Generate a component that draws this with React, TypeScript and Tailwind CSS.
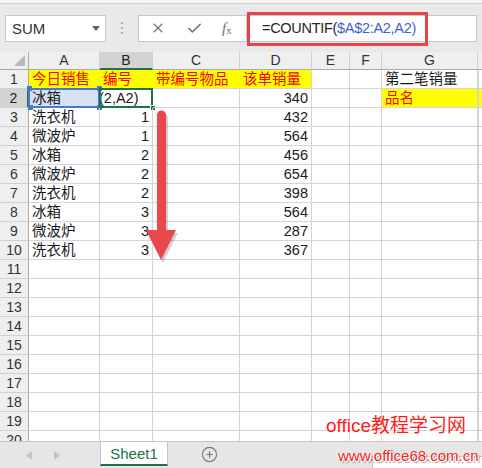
import { X, Check, CirclePlus } from 'lucide-react';

const COLS = [
  { key: 'A', w: 'w-[71px]' },
  { key: 'B', w: 'w-[53px]' },
  { key: 'C', w: 'w-[87px]' },
  { key: 'D', w: 'w-[72px]' },
  { key: 'E', w: 'w-[38px]' },
  { key: 'F', w: 'w-[32px]' },
  { key: 'G', w: 'w-[96px]' },
];

type CellData = { text?: string; red?: boolean; fill?: boolean; right?: boolean };

const NAMES = ['冰箱', '洗衣机', '微波炉', '冰箱', '微波炉', '洗衣机', '冰箱', '微波炉', '洗衣机'];
const NUMS = ['', '1', '1', '2', '2', '2', '3', '3', '3'];
const SALES = ['340', '432', '564', '456', '654', '398', '564', '287', '367'];

function buildRows(): Record<string, CellData>[] {
  const rows: Record<string, CellData>[] = [];
  rows.push({
    A: { text: '今日销售', red: true, fill: true },
    B: { text: '编号', red: true, fill: true },
    C: { text: '带编号物品', red: true, fill: true },
    D: { text: '该单销量', red: true, fill: true },
    G: { text: '第二笔销量' },
  });
  for (let i = 0; i < 9; i++) {
    const r: Record<string, CellData> = {
      A: { text: NAMES[i] },
      B: { text: NUMS[i], right: i > 0 },
      D: { text: SALES[i], right: true },
    };
    if (i === 0) r.G = { text: '品名', red: true, fill: true };
    rows.push(r);
  }
  for (let i = 11; i <= 20; i++) rows.push({});
  return rows;
}

const ROWS = buildRows();

function Handle({ pos, color }: { pos: string; color: string }) {
  return <div className={`absolute w-[5px] h-[5px] ${pos} ${color}`} />;
}

function Cell({ col, row, data }: { col: (typeof COLS)[number]; row: number; data?: CellData }) {
  const fillCls = data?.fill ? 'bg-[#ffff00]' : '';
  const rightBorder = data?.fill && col.key !== 'D' && col.key !== 'G' ? 'border-r-[#ffff00]' : 'border-r-[#d4d4d4]';
  const selectedA = row === 2 && col.key === 'A';
  const editingB = row === 2 && col.key === 'B';
  return (
    <div
      className={`${col.w} shrink-0 h-full relative border-r border-b border-b-[#d4d4d4] ${rightBorder} ${fillCls} ${
        selectedA ? 'bg-[#d6e2f4]' : ''
      } flex items-center ${data?.right ? 'justify-end pr-[3px]' : editingB ? 'pl-0' : 'pl-[3px]'}`}
    >
      {data?.text && (
        <span className={`whitespace-nowrap leading-none ${data.red ? 'text-[#ff0000]' : 'text-[#1a1a1a]'}`}>
          {data.text}
        </span>
      )}
      {editingB && (
        <span className="whitespace-nowrap leading-none text-[#1a1a1a] -ml-[1px]">(2,A2)</span>
      )}
      {selectedA && (
        <>
          <div className="absolute -left-[1px] -top-[1px] -right-[1px] -bottom-[1px] border-2 border-[#4a78d0]" />
          <Handle pos="-left-[2px] -top-[3px]" color="bg-[#4a78d0]" />
          <Handle pos="-right-[3px] -top-[3px]" color="bg-[#4a78d0]" />
          <Handle pos="-left-[1px] -bottom-[3px]" color="bg-[#4a78d0]" />
          <Handle pos="-right-[3px] -bottom-[3px]" color="bg-[#4a78d0]" />
        </>
      )}
      {editingB && (
        <>
          <div className="absolute -left-[1px] -top-[1px] -right-[1px] -bottom-[1px] border-2 border-[#217346]" />
          <div className="absolute -right-[4px] -bottom-[4px] w-[6px] h-[6px] bg-[#217346] border border-white" />
        </>
      )}
    </div>
  );
}

function RowHeader({ n }: { n: number }) {
  const active = n === 2;
  return (
    <div
      className={`w-[29px] shrink-0 h-full flex items-center justify-center text-[14px] border-b border-b-[#d0d0d0] ${
        active ? 'bg-[#d3d3d3] border-r-2 border-r-[#217346] text-[#222]' : 'bg-[#efefef] border-r border-r-[#ababab] text-[#333]'
      }`}
    >
      {n}
    </div>
  );
}

function FormulaBar() {
  return (
    <div className="h-[48px] bg-[#e9e9e9] flex items-center px-[5px]">
      <div className="w-[101px] h-[27px] bg-white border border-[#c6c6c6] flex items-center justify-between pl-[6px] pr-[5px]">
        <span className="text-[15px] text-[#333] leading-none">SUM</span>
        <svg width="8" height="5" viewBox="0 0 8 5">
          <path d="M0 0 L8 0 L4 5 Z" fill="#666" />
        </svg>
      </div>
      <div className="w-[32px] flex flex-col items-center gap-[3px]">
        <div className="w-[2px] h-[2px] bg-[#a9a9a9]" />
        <div className="w-[2px] h-[2px] bg-[#a9a9a9]" />
        <div className="w-[2px] h-[2px] bg-[#a9a9a9]" />
      </div>
      <div className="w-[108px] h-[27px] bg-white border border-[#c6c6c6] border-r-0 flex items-center pl-[11px]">
        <X size={16} strokeWidth={1.7} color="#6f6f6f" />
        <Check size={17} strokeWidth={2.2} color="#6f6f6f" className="ml-[20px]" />
        <span className="ml-[19px] font-['Liberation_Serif',serif] italic text-[#6f6f6f] text-[15px] leading-none">
          f<span className="text-[11px] not-italic relative top-[1px]">x</span>
        </span>
      </div>
      <div className="flex-1 h-[27px] bg-white border border-[#c6c6c6] relative flex items-center pl-[15px]">
        <span className="text-[14.5px] tracking-[-0.3px] leading-none text-[#262626] whitespace-nowrap">
          =COUNTIF(<span className="text-[#3d63c9]">$A$2:A2,A2)</span>
        </span>
        <div className="absolute left-0 -top-[4px] w-[181px] h-[34px] border-[3px] border-[#e8454a]" />
      </div>
    </div>
  );
}

function ColumnHeaders() {
  return (
    <div className="flex h-[18px]">
      <div className="w-[29px] shrink-0 h-full bg-[#efefef] border-r border-b border-[#ababab] relative">
        <svg className="absolute right-[3px] bottom-[3px]" width="11" height="11" viewBox="0 0 11 11">
          <path d="M11 0 L11 11 L0 11 Z" fill="#b9b9b9" />
        </svg>
      </div>
      {COLS.map((c) => {
        const active = c.key === 'B';
        return (
          <div
            key={c.key}
            className={`${c.w} shrink-0 h-full flex items-center justify-center text-[14px] border-r border-r-[#cfcfcf] ${
              active ? 'bg-[#d3d3d3] border-b-2 border-b-[#217346] text-[#222]' : 'bg-[#efefef] border-b border-b-[#ababab] text-[#333]'
            }`}
          >
            {c.key}
          </div>
        );
      })}
      <div className="flex-1 h-full bg-[#efefef] border-b border-b-[#ababab]" />
    </div>
  );
}

function Grid() {
  return (
    <div className="h-[389px] overflow-hidden bg-white text-[14.5px]">
      <ColumnHeaders />
      {ROWS.map((r, i) => (
        <div key={i} className="flex h-[19px]">
          <RowHeader n={i + 1} />
          {COLS.map((c) => (
            <Cell key={c.key} col={c} row={i + 1} data={r[c.key]} />
          ))}
          <div className={`flex-1 h-full border-b border-b-[#d4d4d4] border-l border-l-[#d4d4d4] ${i === 1 ? 'bg-[#ffff00]' : ''}`} />
        </div>
      ))}
    </div>
  );
}

function TabBar() {
  return (
    <div className="h-[27px] bg-[#e6e6e6] border-t border-[#c6c6c6] flex relative">
      <div className="w-[100px] flex items-center pl-[26px] gap-[22px]">
        <svg width="6" height="9" viewBox="0 0 6 9">
          <path d="M6 0 L6 9 L0 4.5 Z" fill="#c3c3c3" />
        </svg>
        <svg width="6" height="9" viewBox="0 0 6 9">
          <path d="M0 0 L0 9 L6 4.5 Z" fill="#c3c3c3" />
        </svg>
      </div>
      <div className="w-[68px] h-[24px] bg-white border-x border-[#c6c6c6] border-b-2 border-b-[#217346] flex items-center justify-center text-[15px] text-[#217346] leading-none">
        Sheet1
      </div>
      <div className="ml-[33px] flex items-center h-[24px]">
        <CirclePlus size={17} strokeWidth={1.6} color="#7a7a7a" />
      </div>
      <div className="absolute left-[372px] top-[14px] right-0 bottom-0 bg-white border-l border-t border-[#c6c6c6]" />
    </div>
  );
}

function Arrow() {
  return (
    <svg className="absolute left-0 top-0 pointer-events-none" width="482" height="468" viewBox="0 0 482 468">
      <g opacity="0.18" transform="translate(2 2)">
        <path d="M157 116 a4.5 4.5 0 0 1 9 0 L166 232 L157 232 Z" fill="#000" />
        <path d="M146 231 L176 231 L161 261 Z" fill="#000" />
      </g>
      <path d="M157 115 a4.5 4.5 0 0 1 9 0 L166 232 L157 232 Z" fill="#e8484b" />
      <path d="M146 230 L176 230 L161 260 Z" fill="#e8484b" />
    </svg>
  );
}

export default function App() {
  return (
    <div className="w-[482px] h-[468px] overflow-hidden relative bg-white font-['Liberation_Sans','Noto_Sans_CJK_SC',sans-serif]">
      <div className="h-[4px] bg-[#f3f3f3] border-b border-[#d2d2d2]" />
      <FormulaBar />
      <Grid />
      <TabBar />
      <Arrow />
      <div className="absolute left-[326px] top-[416px] text-[19px] leading-none text-[#ff1c1c] whitespace-nowrap">
        office教程学习网
      </div>
      <div className="absolute left-[338px] top-[448px] text-[15px] leading-none text-[#f01e1e] whitespace-nowrap [text-shadow:1px_1px_0_#ffffff,-1px_0_0_#ffffff,2px_2px_1px_#9a9a9a]">
        www.office68.com.cn
      </div>
    </div>
  );
}
